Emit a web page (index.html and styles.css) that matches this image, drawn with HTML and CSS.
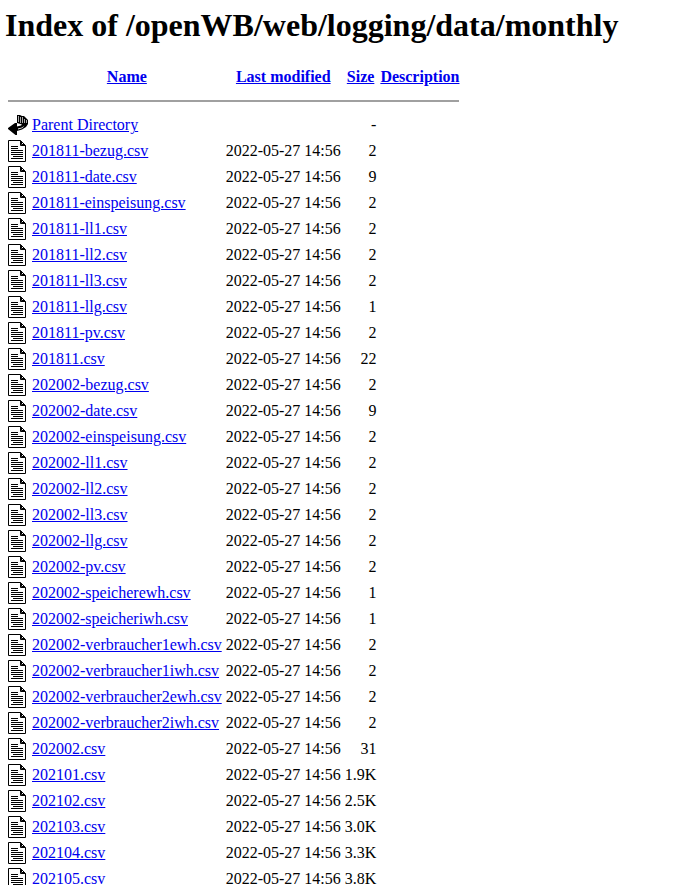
FILE: index.html
```html
<!DOCTYPE html>
<html>
<head>
<title>Index of /openWB/web/logging/data/monthly</title>
<link rel="stylesheet" href="styles.css">
</head>
<body>
<svg class="defs" width="0" height="0" aria-hidden="true">
<defs>
<symbol id="txt" viewBox="0 0 20 22">
<path d="M.5 .5H12.5L17.5 5.5V21.5H.5Z" fill="#fff" stroke="#000"/>
<path d="M12.5 .5V5.5H17.5M13.5 1.5V4.5H16.5" fill="none" stroke="#000"/>
<path d="M3 6.5H10M3 8.5H10M3 10.5H15M3 12.5H15M3 14.5H15M5 16.5H15M3 18.5H15" stroke="#000" fill="none"/>
</symbol>
<symbol id="back" viewBox="0 0 20 22">
<path d="M9 1H12L14 2H16L18 4L20 6V10L18 13L14 15.5L9 17V21H7.5L0 15V14L7 9H9V12.5L13 11.5L14 10.5L9 9Z" fill="#000"/>
<path d="M10 2H11V8H10ZM12 3H13V9H12ZM14 3H15V9H14ZM16 5H17V9H16ZM18 6H19V9H18Z" fill="#aaa"/>
<path d="M10 14.5L14 13.5L16.5 11.5L14.5 14L10 15.5Z" fill="#fff"/>
</symbol>
</defs>
</svg>
<h1 class="title">Index of /openWB/web/logging/data/monthly</h1>
<table class="listing">
<tr><th class="iconcell"><span class="blank"></span></th><th><a href="#">Name</a></th><th><a href="#">Last modified</a></th><th><a href="#">Size</a></th><th><a href="#">Description</a></th></tr>
<tr><th colspan="5"><hr class="rule"></th></tr>
<tr><td class="iconcell"><svg class="icon"><use href="#back"/></svg></td><td><a href="#">Parent Directory</a></td><td>&nbsp;</td><td class="size">-</td><td>&nbsp;</td></tr>
<tr><td class="iconcell"><svg class="icon"><use href="#txt"/></svg></td><td><a href="#">201811-bezug.csv</a></td><td class="date">2022-05-27 14:56</td><td class="size">2</td><td>&nbsp;</td></tr>
<tr><td class="iconcell"><svg class="icon"><use href="#txt"/></svg></td><td><a href="#">201811-date.csv</a></td><td class="date">2022-05-27 14:56</td><td class="size">9</td><td>&nbsp;</td></tr>
<tr><td class="iconcell"><svg class="icon"><use href="#txt"/></svg></td><td><a href="#">201811-einspeisung.csv</a></td><td class="date">2022-05-27 14:56</td><td class="size">2</td><td>&nbsp;</td></tr>
<tr><td class="iconcell"><svg class="icon"><use href="#txt"/></svg></td><td><a href="#">201811-ll1.csv</a></td><td class="date">2022-05-27 14:56</td><td class="size">2</td><td>&nbsp;</td></tr>
<tr><td class="iconcell"><svg class="icon"><use href="#txt"/></svg></td><td><a href="#">201811-ll2.csv</a></td><td class="date">2022-05-27 14:56</td><td class="size">2</td><td>&nbsp;</td></tr>
<tr><td class="iconcell"><svg class="icon"><use href="#txt"/></svg></td><td><a href="#">201811-ll3.csv</a></td><td class="date">2022-05-27 14:56</td><td class="size">2</td><td>&nbsp;</td></tr>
<tr><td class="iconcell"><svg class="icon"><use href="#txt"/></svg></td><td><a href="#">201811-llg.csv</a></td><td class="date">2022-05-27 14:56</td><td class="size">1</td><td>&nbsp;</td></tr>
<tr><td class="iconcell"><svg class="icon"><use href="#txt"/></svg></td><td><a href="#">201811-pv.csv</a></td><td class="date">2022-05-27 14:56</td><td class="size">2</td><td>&nbsp;</td></tr>
<tr><td class="iconcell"><svg class="icon"><use href="#txt"/></svg></td><td><a href="#">201811.csv</a></td><td class="date">2022-05-27 14:56</td><td class="size">22</td><td>&nbsp;</td></tr>
<tr><td class="iconcell"><svg class="icon"><use href="#txt"/></svg></td><td><a href="#">202002-bezug.csv</a></td><td class="date">2022-05-27 14:56</td><td class="size">2</td><td>&nbsp;</td></tr>
<tr><td class="iconcell"><svg class="icon"><use href="#txt"/></svg></td><td><a href="#">202002-date.csv</a></td><td class="date">2022-05-27 14:56</td><td class="size">9</td><td>&nbsp;</td></tr>
<tr><td class="iconcell"><svg class="icon"><use href="#txt"/></svg></td><td><a href="#">202002-einspeisung.csv</a></td><td class="date">2022-05-27 14:56</td><td class="size">2</td><td>&nbsp;</td></tr>
<tr><td class="iconcell"><svg class="icon"><use href="#txt"/></svg></td><td><a href="#">202002-ll1.csv</a></td><td class="date">2022-05-27 14:56</td><td class="size">2</td><td>&nbsp;</td></tr>
<tr><td class="iconcell"><svg class="icon"><use href="#txt"/></svg></td><td><a href="#">202002-ll2.csv</a></td><td class="date">2022-05-27 14:56</td><td class="size">2</td><td>&nbsp;</td></tr>
<tr><td class="iconcell"><svg class="icon"><use href="#txt"/></svg></td><td><a href="#">202002-ll3.csv</a></td><td class="date">2022-05-27 14:56</td><td class="size">2</td><td>&nbsp;</td></tr>
<tr><td class="iconcell"><svg class="icon"><use href="#txt"/></svg></td><td><a href="#">202002-llg.csv</a></td><td class="date">2022-05-27 14:56</td><td class="size">2</td><td>&nbsp;</td></tr>
<tr><td class="iconcell"><svg class="icon"><use href="#txt"/></svg></td><td><a href="#">202002-pv.csv</a></td><td class="date">2022-05-27 14:56</td><td class="size">2</td><td>&nbsp;</td></tr>
<tr><td class="iconcell"><svg class="icon"><use href="#txt"/></svg></td><td><a href="#">202002-speicherewh.csv</a></td><td class="date">2022-05-27 14:56</td><td class="size">1</td><td>&nbsp;</td></tr>
<tr><td class="iconcell"><svg class="icon"><use href="#txt"/></svg></td><td><a href="#">202002-speicheriwh.csv</a></td><td class="date">2022-05-27 14:56</td><td class="size">1</td><td>&nbsp;</td></tr>
<tr><td class="iconcell"><svg class="icon"><use href="#txt"/></svg></td><td><a href="#">202002-verbraucher1ewh.csv</a></td><td class="date">2022-05-27 14:56</td><td class="size">2</td><td>&nbsp;</td></tr>
<tr><td class="iconcell"><svg class="icon"><use href="#txt"/></svg></td><td><a href="#">202002-verbraucher1iwh.csv</a></td><td class="date">2022-05-27 14:56</td><td class="size">2</td><td>&nbsp;</td></tr>
<tr><td class="iconcell"><svg class="icon"><use href="#txt"/></svg></td><td><a href="#">202002-verbraucher2ewh.csv</a></td><td class="date">2022-05-27 14:56</td><td class="size">2</td><td>&nbsp;</td></tr>
<tr><td class="iconcell"><svg class="icon"><use href="#txt"/></svg></td><td><a href="#">202002-verbraucher2iwh.csv</a></td><td class="date">2022-05-27 14:56</td><td class="size">2</td><td>&nbsp;</td></tr>
<tr><td class="iconcell"><svg class="icon"><use href="#txt"/></svg></td><td><a href="#">202002.csv</a></td><td class="date">2022-05-27 14:56</td><td class="size">31</td><td>&nbsp;</td></tr>
<tr><td class="iconcell"><svg class="icon"><use href="#txt"/></svg></td><td><a href="#">202101.csv</a></td><td class="date">2022-05-27 14:56</td><td class="size">1.9K</td><td>&nbsp;</td></tr>
<tr><td class="iconcell"><svg class="icon"><use href="#txt"/></svg></td><td><a href="#">202102.csv</a></td><td class="date">2022-05-27 14:56</td><td class="size">2.5K</td><td>&nbsp;</td></tr>
<tr><td class="iconcell"><svg class="icon"><use href="#txt"/></svg></td><td><a href="#">202103.csv</a></td><td class="date">2022-05-27 14:56</td><td class="size">3.0K</td><td>&nbsp;</td></tr>
<tr><td class="iconcell"><svg class="icon"><use href="#txt"/></svg></td><td><a href="#">202104.csv</a></td><td class="date">2022-05-27 14:56</td><td class="size">3.3K</td><td>&nbsp;</td></tr>
<tr><td class="iconcell"><svg class="icon"><use href="#txt"/></svg></td><td><a href="#">202105.csv</a></td><td class="date">2022-05-27 14:56</td><td class="size">3.8K</td><td>&nbsp;</td></tr>
</table>
</body>
</html>
```
FILE: styles.css
```css
html, body {
  background: #fff;
  color: #000;
  font-family: "Liberation Serif", "Times New Roman", serif;
  font-size: 16px;
}
body {
  margin: 5px;
}
.defs {
  position: absolute;
}
.title {
  font-size: 32px;
  font-weight: bold;
  margin: 0 0 19.44px;
  padding-top: 2px;
}
.listing th, .listing td {
  vertical-align: middle;
}
.listing .iconcell {
  vertical-align: top;
}
.size {
  text-align: right;
}
.blank {
  display: block;
  width: 20px;
  height: 22px;
}
.icon {
  display: block;
  width: 20px;
  height: 22px;
}
.rule {
  margin: 8px auto;
  height: 0;
  border: 0;
  border-top: 2px solid #a0a0a0;
}
```
